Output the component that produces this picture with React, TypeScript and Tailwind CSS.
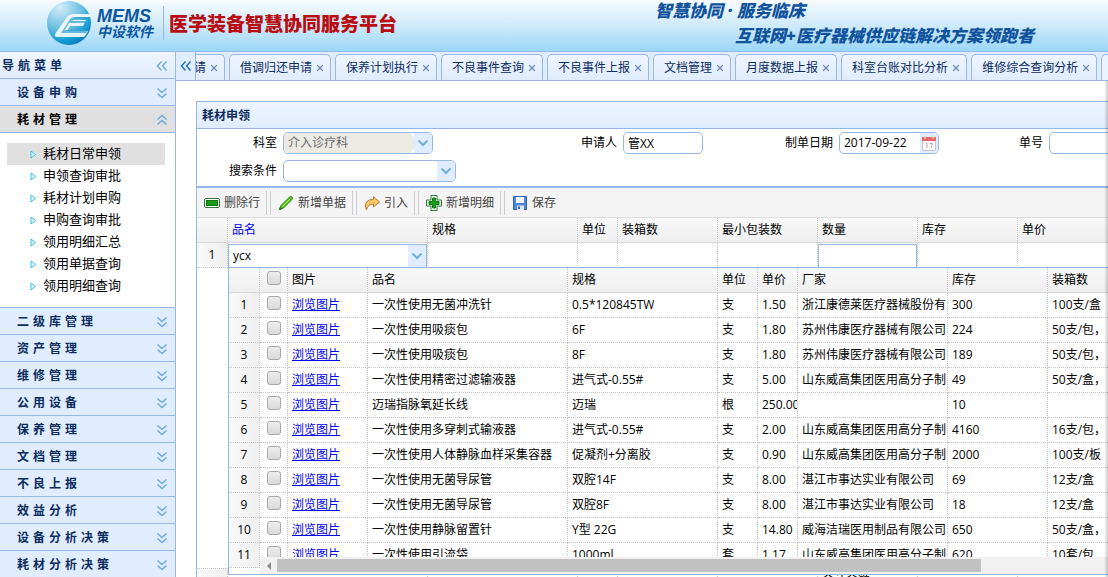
import { X } from 'lucide-react';
import type { ReactNode } from 'react';

const tabs = [
  '借调归还申请',
  '保养计划执行',
  '不良事件查询',
  '不良事件上报',
  '文档管理',
  '月度数据上报',
  '科室台账对比分析',
  '维修综合查询分析',
];

const subMenu = [
  '耗材日常申领',
  '申领查询审批',
  '耗材计划申购',
  '申购查询审批',
  '领用明细汇总',
  '领用单据查询',
  '领用明细查询',
];

const menus = [
  '二级库管理',
  '资产管理',
  '维修管理',
  '公用设备',
  '保养管理',
  '文档管理',
  '不良上报',
  '效益分析',
  '设备分析决策',
  '耗材分析决策',
];

const products = [
  ['一次性使用无菌冲洗针', '0.5*120845TW', '支', '1.50', '浙江康德莱医疗器械股份有', '300', '100支/盒'],
  ['一次性使用吸痰包', '6F', '支', '1.80', '苏州伟康医疗器械有限公司', '224', '50支/包，'],
  ['一次性使用吸痰包', '8F', '支', '1.80', '苏州伟康医疗器械有限公司', '189', '50支/包，'],
  ['一次性使用精密过滤输液器', '进气式-0.55#', '支', '5.00', '山东威高集团医用高分子制', '49', '50支/盒，'],
  ['迈瑞指脉氧延长线', '迈瑞', '根', '250.00', '', '10', ''],
  ['一次性使用多穿刺式输液器', '进气式-0.55#', '支', '2.00', '山东威高集团医用高分子制', '4160', '16支/包，'],
  ['一次性使用人体静脉血样采集容器', '促凝剂+分离胶', '支', '0.90', '山东威高集团医用高分子制', '2000', '100支/板'],
  ['一次性使用无菌导尿管', '双腔14F', '支', '8.00', '湛江市事达实业有限公司', '69', '12支/盒'],
  ['一次性使用无菌导尿管', '双腔8F', '支', '8.00', '湛江市事达实业有限公司', '18', '12支/盒'],
  ['一次性使用静脉留置针', 'Y型 22G', '支', '14.80', '威海洁瑞医用制品有限公司', '650', '50支/盒，'],
  ['一次性使用引流袋', '1000ml', '套', '1.17', '山东威高集团医用高分子制', '620', '10套/包'],
];

const cell = 'h-[25px] overflow-hidden border-r border-b border-dotted border-[#c4c4c4] px-1 py-0 text-left font-normal whitespace-nowrap';
const editCell = 'h-[25px] border-r border-dotted border-[#c4c4c4] p-0 align-bottom';
const headCell = 'h-[25px] overflow-hidden border-r border-b border-r-[#c4c4c4] border-b-[#d8d8d8] [border-right-style:dotted] bg-linear-to-b from-[#f9f9f9] to-[#efefef] px-1 py-0 text-left font-normal whitespace-nowrap';
const numberCell = 'h-[25px] border-r border-b border-dotted border-[#c4c4c4] bg-linear-to-r from-[#f9f9f9] to-[#efefef] p-0 text-center font-normal';
const box = 'flex h-[22px] shrink-0 overflow-hidden rounded-[5px] border border-[#95b8e7] bg-white';

function DoubleChevron({ className }: { className?: string }) {
  return (
    <svg viewBox="0 0 12 12" className={`size-3 shrink-0 ${className ?? ''}`} fill="none" strokeWidth="1.4">
      <path d="M1.5 1.5 6 5.5l4.5-4M1.5 6.5 6 10.5l4.5-4" stroke="currentColor" />
    </svg>
  );
}

function Arrow() {
  return (
    <span className="flex w-[18px] shrink-0 items-center justify-center bg-[#e0ecff]">
      <svg viewBox="0 0 12 8" className="h-2 w-3" fill="none">
        <path d="m1.5 1.5 4.5 4.5 4.5-4.5" stroke="#6fb0dc" strokeWidth="2" />
      </svg>
    </span>
  );
}

function Logo() {
  return (
    <svg viewBox="0 0 46 46" className="size-[46px] shrink-0" aria-hidden="true">
      <defs>
        <radialGradient id="ball" cx="0.3" cy="0.15" r="0.95">
          <stop offset="0" stopColor="#d3edf8" />
          <stop offset="0.5" stopColor="#6fc0e2" />
          <stop offset="0.8" stopColor="#109ad6" />
          <stop offset="1" stopColor="#0b6fb5" />
        </radialGradient>
      </defs>
      <circle cx="23" cy="23" r="22" fill="url(#ball)" />
      <path d="M45 14H27q-5 0-8 6L9 34q-1 3 2 3h27q3-3 4-6H21l3-5h13l3-6H26q2-3 5-3h14z" fill="#f3fafd" fillOpacity="0.92" />
      <path d="M43 17H29q-4 0-6 4l-8 12h25l2-3H19l4-7h16l1-2H26q1-2 4-2h14z" fill="#2d9fd2" fillOpacity="0.7" />
    </svg>
  );
}

function Header() {
  return (
    <header className="flex h-[51px] shrink-0 overflow-hidden bg-linear-to-b from-[#f7fcff] via-[#cfeafa] to-[#9bd7f7] pl-[46px] font-bold whitespace-nowrap">
      <Logo />
      <div className="mt-[7px] ml-[5px] w-[57px] shrink-0 text-[#0b56a0] italic">
        <div className="font-['Liberation_Sans',sans-serif] text-[18px] leading-[18px]">MEMS</div>
        <div className="text-sm leading-[14px]">中设软件</div>
      </div>
      <div className="mt-1.5 ml-[9px] h-[34px] w-px shrink-0 bg-[#9db9cc]" />
      <h1 className="mt-3 ml-[5px] text-[19px] leading-6 font-black text-[#b80d12]">医学装备智慧协同服务平台</h1>
      <div className="-mt-0.5 ml-[258px] text-[17px] leading-[25px] font-black text-[#10539c] italic">
        <p>智慧协同 · 服务临床</p>
        <p className="pl-20">互联网+医疗器械供应链解决方案领跑者</p>
      </div>
    </header>
  );
}

function MenuTitle({ text, open }: { text: string; open?: boolean }) {
  return (
    <button
      className={`flex h-[27px] w-full items-center justify-between border-b border-[#95b8e7] pt-px pr-[7px] pl-[17px] text-xs font-bold tracking-[4px] ${
        open ? 'bg-[#e0e0e0] text-black' : 'bg-[#e0ecff] text-[#0e2d5f]'
      }`}
    >
      {text}
      <DoubleChevron className={`text-[#6ea9dd] ${open ? 'rotate-180' : ''}`} />
    </button>
  );
}

function Sidebar() {
  return (
    <aside className="w-44 shrink-0 border-r border-[#95b8e7]">
      <div className="flex h-[27px] items-center justify-between border-b border-[#95b8e7] bg-linear-to-b from-[#eff5ff] to-[#e0ecff] pt-px pr-[7px] pl-0.5 text-xs font-bold tracking-[4px] text-[#0e2d5f]">
        导航菜单
        <DoubleChevron className="rotate-90 text-[#6ea9dd]" />
      </div>
      <MenuTitle text="设备申购" />
      <MenuTitle text="耗材管理" open />
      <ul className="h-[175px] border-b border-[#95b8e7] px-[7px] pt-2.5">
        {subMenu.map((item, i) => (
          <li key={item}>
            <a
              href="#"
              className={`mr-[3px] flex h-[22px] items-center gap-1.5 pl-[23px] text-[13px] text-black ${i === 0 ? 'bg-[#e0e0e0]' : ''}`}
            >
              <svg viewBox="0 0 7 9" className="h-[9px] w-[7px]">
                <path d="M1 1v7l4.5-3.5z" fill="#e6fbff" stroke="#35bfe0" />
              </svg>
              {item}
            </a>
          </li>
        ))}
      </ul>
      {menus.map((m) => (
        <MenuTitle key={m} text={m} />
      ))}
    </aside>
  );
}

function Tab({ title, partial }: { title: string; partial?: boolean }) {
  return (
    <div
      className={`flex h-[26px] shrink-0 items-center gap-[3px] border border-b-0 border-[#95b8e7] bg-linear-to-b from-[#eff5ff] to-[#e0ecff] pr-[5px] text-[#0e2d5f] ${
        partial ? '-ml-0.5 rounded-tr-[5px] border-l-0' : 'rounded-t-[5px] pl-2.5'
      }`}
    >
      <button>{title}</button>
      <button aria-label="关闭">
        <X className="size-2.5" strokeWidth={3} color="#6f8bb8" />
      </button>
    </div>
  );
}

function TabBar() {
  return (
    <div className="flex h-[29px] shrink-0 border-b border-[#95b8e7] bg-[#e0ecff]">
      <button aria-label="向左滚动" className="flex w-5 shrink-0 items-center justify-center border-r border-[#95b8e7]">
        <DoubleChevron className="rotate-90 text-[#1f6fc0]" />
      </button>
      <div className="flex min-w-0 flex-1 items-end gap-1 overflow-hidden">
        <Tab title="请" partial />
        {tabs.map((t) => (
          <Tab key={t} title={t} />
        ))}
        <div className="h-[26px] w-20 shrink-0 rounded-tl-[5px] border border-b-0 border-[#95b8e7] bg-[#eaf2ff]" />
      </div>
    </div>
  );
}

function SearchForm() {
  return (
    <form className="flex h-[59px] flex-col gap-1.5 overflow-hidden border-b-2 border-[#95b8e7] pt-[3px] whitespace-nowrap">
      <div className="flex items-center gap-1.5">
        <label htmlFor="dept" className="w-20 shrink-0 text-right">科室</label>
        <div className={`${box} w-[150px]`}>
          <select id="dept" className="min-w-0 flex-1 appearance-none rounded-r-md bg-[#ebebe4] pl-1 text-[#6b6b6b]">
            <option>介入诊疗科</option>
          </select>
          <Arrow />
        </div>
        <label htmlFor="applicant" className="-ml-1.5 w-[184px] shrink-0 text-right">申请人</label>
        <input id="applicant" defaultValue="管XX" className={`${box} w-20 px-1`} />
        <label htmlFor="date" className="-ml-1.5 w-[130px] shrink-0 text-right">制单日期</label>
        <div className={`${box} w-[100px]`}>
          <input id="date" defaultValue="2017-09-22" className="min-w-0 flex-1 pl-1" />
          <span className="flex w-[18px] items-center justify-center bg-[#e0ecff]">
            <svg viewBox="0 0 14 16" className="h-4 w-3.5">
              <path d="M.5 3h13v12.5H.5z" fill="#f7f7f7" stroke="#c9c9c9" />
              <path d="M0 2h14v4H0z" fill="#e8636a" />
              <path d="M3 .5v3M11 .5v3" stroke="#f7dfa5" strokeWidth="2" />
              <path d="m4 9 1-1v5M7.5 8.5h3L9 13" fill="none" stroke="#c2b3ae" />
            </svg>
          </span>
        </div>
        <label htmlFor="code" className="-ml-1.5 w-[104px] shrink-0 text-right">单号</label>
        <input id="code" className={`${box} w-[150px] px-1`} />
      </div>
      <div className="flex items-center gap-1.5">
        <label htmlFor="cond" className="w-20 shrink-0 text-right">搜索条件</label>
        <div className={`${box} w-[173px]`}>
          <select id="cond" className="min-w-0 flex-1 appearance-none pl-1">
            <option></option>
          </select>
          <Arrow />
        </div>
      </div>
    </form>
  );
}

function ToolButton({ icon, text }: { icon: ReactNode; text: string }) {
  return (
    <button className="flex h-6 shrink-0 items-center gap-1 px-1.5 text-[#444]">
      <svg viewBox="0 0 16 16" className="size-4">{icon}</svg>
      {text}
    </button>
  );
}

function Separator() {
  return <div className="mr-px h-6 w-[5px] shrink-0 border-x border-[#ccc]" />;
}

function Toolbar() {
  return (
    <div className="flex h-[29px] items-center overflow-hidden bg-[#f4f4f4] pl-px">
      <ToolButton
        text="删除行"
        icon={
          <>
            <rect x="0.5" y="3.5" width="15" height="9" rx="1.5" fill="#fff" stroke="#2c7a36" />
            <rect x="2.5" y="5.5" width="11" height="5" fill="#149a14" stroke="#0b7a12" />
          </>
        }
      />
      <Separator />
      <ToolButton
        text="新增单据"
        icon={
          <>
            <path d="M1.5 14.5 3 10.500 11.5 2q1.5-1 2.500 0t0 2.500L5.500 13z" fill="#5fc21f" stroke="#2b8a1c" />
            <path d="M4.5 11.5 12 4" stroke="#b5f07f" />
            <path d="m1 15 1-3 2 2z" fill="#33502a" />
          </>
        }
      />
      <Separator />
      <ToolButton
        text="引入"
        icon={
          <path d="M9.5 1.5 15.5 7l-6 5V9Q4 8.5 2.5 15 0 10 2.5 7 5 4 9.500 4.500z" fill="#fbc764" stroke="#b8783a" strokeLinejoin="round" />
        }
      />
      <Separator />
      <ToolButton
        text="新增明细"
        icon={
          <>
            <path d="M5 .5h6V5h4.500v6H11v4.500H5V11H.5V5H5z" fill="#fff" stroke="#2c7a36" strokeLinejoin="round" />
            <path d="M6.5 3h3v3.500H13v3H9.500V13h-3V9.500H3v-3h3.500z" fill="#17a017" stroke="#0b7a12" />
          </>
        }
      />
      <Separator />
      <ToolButton
        text="保存"
        icon={
          <>
            <path d="M1.5 1.5h13v13h-13z" fill="#4f86d9" stroke="#2f62b8" />
            <path d="M4 2h8v6H4z" fill="#f4f8ff" />
            <path d="M5 10.500h7V15H5z" fill="#dfe6f0" />
            <path d="M6 11.500h2V14H6z" fill="#2f62b8" />
          </>
        }
      />
    </div>
  );
}

function CheckBox({ label }: { label: string }) {
  return (
    <input
      type="checkbox"
      aria-label={label}
      className="mx-auto mb-1 block size-3.5 appearance-none rounded-[3px] border border-[#a9a9a9] bg-linear-to-b from-[#ededed] to-[#d9d9d9]"
    />
  );
}

/* Drop-down grid of the 品名 combo: frozen row numbers on the left, scrolling columns on the right */
function ProductPanel() {
  return (
    <div className="absolute top-6 right-0 left-[31px] z-10 flex h-[308px] overflow-hidden border border-r-0 border-[#95b8e7] bg-white">
      <div className="w-[31px] shrink-0 overflow-hidden">
        <table className="w-px table-fixed border-separate border-spacing-0">
          <colgroup>
            <col className="w-[31px]" />
          </colgroup>
          <thead>
            <tr>
              <th className={headCell} />
            </tr>
          </thead>
          <tbody>
            {products.map((_, i) => (
              <tr key={i}>
                <td className={numberCell}>{i + 1}</td>
              </tr>
            ))}
          </tbody>
        </table>
      </div>
      <div className="min-w-0 flex-1">
        <div className="h-[289px] overflow-hidden">
          <table className="w-px table-fixed border-separate border-spacing-0">
            <colgroup>
              <col className="w-7" />
              <col className="w-20" />
              <col className="w-[200px]" />
              <col className="w-[150px]" />
              <col className="w-10" />
              <col className="w-10" />
              <col className="w-[150px]" />
              <col className="w-[100px]" />
              <col className="w-[100px]" />
            </colgroup>
            <thead>
              <tr>
                <th className={headCell}>
                  <CheckBox label="全选" />
                </th>
                {['图片', '品名', '规格', '单位', '单价', '厂家', '库存', '装箱数'].map((h) => (
                  <th key={h} className={headCell}>{h}</th>
                ))}
              </tr>
            </thead>
            <tbody>
              {products.map((row, i) => (
                <tr key={i}>
                  <td className={cell}>
                    <CheckBox label={`选择第${i + 1}行`} />
                  </td>
                  <td className={cell}>
                    <a href="#" className="text-[#0000ee] underline">浏览图片</a>
                  </td>
                  {row.map((value, j) => (
                    <td key={j} className={cell}>{value}</td>
                  ))}
                </tr>
              ))}
            </tbody>
          </table>
        </div>
        <div className="flex h-[17px] items-center bg-[#f1f1f1]">
          <button aria-label="向左" className="flex w-[17px] shrink-0 justify-center">
            <svg viewBox="0 0 4 8" className="h-2 w-1">
              <path d="M4 0v8L0 4z" fill="#8a8a8a" />
            </svg>
          </button>
          <div className="h-[13px] w-[83%] bg-[#c1c1c1]" />
        </div>
      </div>
    </div>
  );
}

function DetailColumns() {
  return (
    <colgroup>
      <col className="w-[31px]" />
      <col className="w-[200px]" />
      <col className="w-[150px]" />
      <col className="w-10" />
      <col className="w-[100px]" />
      <col className="w-[100px]" />
      <col className="w-[100px]" />
      <col className="w-[100px]" />
      <col className="w-[150px]" />
    </colgroup>
  );
}

function DetailGrid() {
  return (
    <div className="overflow-hidden">
      <table className="w-px table-fixed border-separate border-spacing-0 border-t border-[#ddd]">
        <DetailColumns />
        <thead>
          <tr>
            <th className={headCell} />
            <th className={`${headCell} text-[#0000ee]`}>品名</th>
            {['规格', '单位', '装箱数', '最小包装数', '数量', '库存', '单价'].map((h) => (
              <th key={h} className={headCell}>{h}</th>
            ))}
          </tr>
        </thead>
      </table>
      <div className="relative h-[325px]">
        <table className="w-px table-fixed border-separate border-spacing-0">
          <DetailColumns />
          <tbody>
            <tr>
              <td className={numberCell}>1</td>
              <td className={editCell}>
                <div className="flex h-6 border border-[#95b8e7]">
                  <input aria-label="品名" defaultValue="ycx" className="min-w-0 flex-1 pl-1" />
                  <Arrow />
                </div>
              </td>
              <td className={cell} />
              <td className={cell} />
              <td className={cell} />
              <td className={cell} />
              <td className={editCell}>
                <input aria-label="数量" className="block h-6 w-full border border-[#95b8e7] px-1" />
              </td>
              <td className={cell} />
              <td className={cell} />
            </tr>
          </tbody>
        </table>
        <ProductPanel />
      </div>
      <table className="w-px table-fixed border-separate border-spacing-0">
        <DetailColumns />
        <tbody>
          <tr>
            <td className={`${numberCell} border-t`} />
            <td className={cell} />
            <td className={cell} />
            <td className={cell} />
            <td className={cell} />
            <td className={cell} />
            <td className={cell}>合计金额</td>
            <td className={cell} />
            <td className={cell} />
          </tr>
        </tbody>
      </table>
    </div>
  );
}

export default function App() {
  return (
    <div className="relative flex h-screen flex-col overflow-hidden bg-white font-['Open_Sans','Noto_Sans_CJK_SC',sans-serif] text-xs text-black">
      <Header />
      <div className="flex min-h-0 flex-1 border-t border-[#95b8e7]">
        <Sidebar />
        <div className="flex min-w-0 flex-1 flex-col">
          <TabBar />
          <main className="min-h-0 flex-1 overflow-hidden pt-5 pl-5">
            <section className="border-t border-l border-[#95b8e7]">
              <h2 className="flex h-[27px] items-center border-b border-[#95b8e7] bg-linear-to-b from-[#eff5ff] to-[#e0ecff] pt-px pl-[5px] font-bold text-[#0e2d5f]">
                耗材申领
              </h2>
              <SearchForm />
              <Toolbar />
              <DetailGrid />
            </section>
          </main>
        </div>
      </div>
      {/* Soft shade along the window's right edge */}
      <div className="pointer-events-none absolute top-[81px] right-0 bottom-0 z-20 w-1 bg-linear-to-r from-transparent to-black/20" />
    </div>
  );
}
